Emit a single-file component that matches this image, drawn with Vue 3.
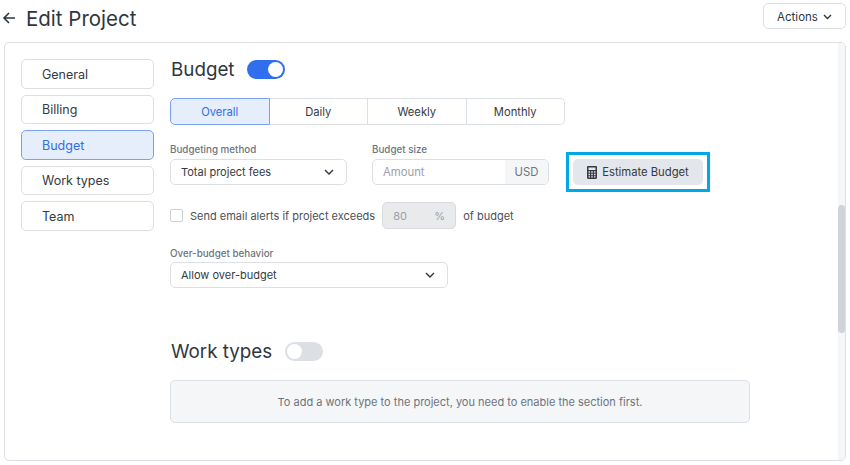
<script setup>
const navItems = ['General', 'Billing', 'Budget', 'Work types', 'Team']
const periods = ['Overall', 'Daily', 'Weekly', 'Monthly']
</script>

<template>
  <div class="page">
    <header class="topbar">
      <div class="title-wrap">
        <svg class="back" width="14" height="14" viewBox="0 0 14 14" fill="none">
          <path d="M13 7H2M7 2L2 7l5 5" stroke="#2f3640" stroke-width="1.6" />
        </svg>
        <h1 class="title">Edit Project</h1>
      </div>
      <button class="actions">
        Actions
        <svg width="9" height="6" viewBox="0 0 9 6" fill="none"><path d="M1 1l3.500 3.500L8 1" stroke="#2f3640" stroke-width="1.400" /></svg>
      </button>
    </header>

    <section class="panel">
      <nav class="nav">
        <div v-for="n in navItems" :key="n" class="nav-item" :class="{ active: n === 'Budget' }">{{ n }}</div>
      </nav>

      <main class="content">
        <div class="heading-row first">
          <h2 class="heading">Budget</h2>
          <span class="toggle on"><span class="knob"></span></span>
        </div>

        <div class="tabs">
          <div v-for="p in periods" :key="p" class="tab" :class="{ active: p === 'Overall' }">{{ p }}</div>
        </div>

        <div class="fields">
          <div class="field method">
            <label class="label">Budgeting method</label>
            <div class="select">
              <span>Total project fees</span>
              <svg width="10" height="6" viewBox="0 0 10 6" fill="none"><path d="M1 1l4 4 4-4" stroke="#2f3640" stroke-width="1.400" /></svg>
            </div>
          </div>
          <div class="field size">
            <label class="label">Budget size</label>
            <div class="amount">
              <span class="placeholder">Amount</span>
              <span class="addon">USD</span>
            </div>
          </div>
          <div class="highlight">
            <button class="estimate">
              <svg width="10" height="13" viewBox="0 0 10 13">
                <path fill-rule="evenodd" fill="#343a43" d="M1.200 0h7.600C9.500 0 10 .5 10 1.200v10.600c0 .7-.5 1.200-1.200 1.200H1.200C.5 13 0 12.500 0 11.800V1.200C0 .5.500 0 1.200 0zM1.500 1.500v2.500h7V1.500zM1.500 5.200v1.500h1.500V5.200zM4.200 5.200v1.500h1.600V5.200zM7 5.200v1.500h1.500V5.200zM1.500 7.800v1.400h1.500V7.800zM4.200 7.800v1.400h1.600V7.800zM7 7.800v1.400h1.500V7.800zM1.500 10.300v1.300h1.500v-1.300zM4.200 10.300v1.300h1.600v-1.300zM7 10.300v1.300h1.500v-1.300z" />
              </svg>
              Estimate Budget
            </button>
          </div>
        </div>

        <div class="alerts">
          <span class="checkbox"></span>
          <span>Send email alerts if project exceeds</span>
          <div class="percent"><span>80</span><span>%</span></div>
          <span>of budget</span>
        </div>

        <div class="field behavior">
          <label class="label">Over-budget behavior</label>
          <div class="select wide">
            <span>Allow over-budget</span>
            <svg width="10" height="6" viewBox="0 0 10 6" fill="none"><path d="M1 1l4 4 4-4" stroke="#2f3640" stroke-width="1.400" /></svg>
          </div>
        </div>

        <div class="heading-row second">
          <h2 class="heading">Work types</h2>
          <span class="toggle"><span class="knob"></span></span>
        </div>

        <div class="notice">To add a work type to the project, you need to enable the section first.</div>
      </main>

      <div class="scrollbar"><div class="thumb"></div></div>
    </section>
  </div>
</template>

<style>
html, body { margin: 0; background: #fff; }
</style>

<style scoped>
.page {
  width: 850px;
  height: 465px;
  box-sizing: border-box;
  padding: 3px 4px 4px;
  display: flex;
  flex-direction: column;
  font-family: Inter, "Noto Sans", sans-serif;
  color: #343a43;
  overflow: hidden;
}
.topbar { display: flex; justify-content: space-between; align-items: flex-start; height: 39px; flex: none; }
.title-wrap { display: flex; align-items: center; gap: 10px; margin-left: -2px; height: 30px; }
.title { margin: 0; font-size: 20.500px; font-weight: 400; color: #2f3640; }
.actions {
  width: 83px; height: 26px; display: flex; align-items: center; justify-content: center; gap: 5px;
  background: #fff; border: 1px solid #dcdfe3; border-radius: 5px;
  font: 400 11.500px Inter, sans-serif; color: #2f3640; padding: 1px 0 0;
}
.panel {
  flex: 1; display: flex; position: relative; box-sizing: border-box;
  border: 1px solid #dcdfe3; border-radius: 5px; padding: 16px 0 0 16px; overflow: hidden; min-height: 0;
}
.nav { width: 133px; flex: none; display: flex; flex-direction: column; gap: 6px; margin-right: 16px; }
.nav-item {
  height: 29.500px; box-sizing: border-box; border: 1px solid #dcdfe3; border-radius: 5px;
  padding: 1px 0 0 20px; display: flex; align-items: center; font-size: 12.500px; color: #343a43;
}
.nav-item.active { background: #e6edfb; border-color: #7ba0ee; color: #2f6fed; }
.content { width: 580px; flex: none; margin-top: -1px; }
.heading-row { display: flex; align-items: center; gap: 13px; height: 22px; margin-bottom: 18px; }
.heading-row.first { gap: 12px; }
.heading-row.second { margin: 52px 0 18px; }
.heading { margin: 0 0 0 1px; font-size: 18.800px; font-weight: 400; color: #2f3640; }
.toggle { width: 38px; height: 19px; border-radius: 10px; background: #dcdfe3; display: flex; align-items: center; padding: 0 2px; box-sizing: border-box; }
.toggle.on { background: #2f6fed; justify-content: flex-end; }
.knob { width: 15px; height: 15px; border-radius: 50%; background: #fff; }
.tabs { display: flex; width: 395px; height: 27px; }
.tab {
  flex: 1; box-sizing: border-box; display: flex; align-items: center; justify-content: center;
  border: 1px solid #dcdfe3; border-left: 0; font-size: 11.200px; color: #343a43;
}
.tab:last-child { border-radius: 0 5px 5px 0; }
.tab.active { background: #e6edfb; border: 1px solid #7ba0ee; border-radius: 5px 0 0 5px; color: #2f6fed; }
.fields { display: flex; align-items: flex-end; margin-top: 19px; }
.field { display: flex; flex-direction: column; }
.label { font-size: 9.800px; font-weight: 500; color: #6d747d; line-height: 12px; margin-bottom: 3px; }
.method { width: 177px; margin-right: 25px; }
.size { width: 177px; margin-right: 17px; }
.select {
  height: 26px; box-sizing: border-box; border: 1px solid #dcdfe3; border-radius: 5px; background: #fff;
  display: flex; align-items: center; justify-content: space-between; padding: 0 12px 0 10px; font-size: 11px; color: #343a43;
}
.amount { height: 26px; box-sizing: border-box; border: 1px solid #dcdfe3; border-radius: 5px; display: flex; align-items: stretch; font-size: 11.300px; overflow: hidden; }
.placeholder { flex: 1; display: flex; align-items: center; padding-left: 10px; color: #9ba1a9; }
.addon { width: 43px; display: flex; align-items: center; justify-content: center; background: #f5f6f8; color: #6d747d; }
.highlight { border: 3px solid #00a8e8; padding: 4px; margin-bottom: -7px; }
.estimate {
  width: 130px; height: 26px; display: flex; align-items: center; justify-content: center; gap: 5px;
  background: #e3e6ea; border: 0; border-radius: 5px; padding: 0; font: 400 11.250px Inter, sans-serif; color: #343a43;
}
.alerts { display: flex; align-items: center; gap: 7px; margin-top: 17px; font-size: 11px; color: #4a5059; height: 27px; }
.checkbox { width: 13px; height: 13px; box-sizing: border-box; border: 1px solid #cdd1d6; border-radius: 2px; }
.percent {
  width: 74px; height: 27px; box-sizing: border-box; background: #e9eaec; border: 1px solid #d8dade; border-radius: 5px;
  display: flex; align-items: center; justify-content: space-between; padding: 0 10px; color: #9ba1a9;
}
.behavior { margin-top: 19px; }
.behavior .label { margin-bottom: 2px; }
.wide { width: 278px; }
.notice {
  width: 580px; height: 43px; box-sizing: border-box; background: #f5f6f8; border: 1px solid #dcdfe3; border-radius: 5px;
  display: flex; align-items: center; justify-content: center; font-size: 11px; color: #6d747d;
}
.scrollbar { position: absolute; right: 0; top: 0; bottom: 0; width: 7px; background: #f5f6f8; }
.thumb { position: absolute; top: 162px; height: 128px; width: 7px; border-radius: 4px; background: #d0d4d9; }
</style>
